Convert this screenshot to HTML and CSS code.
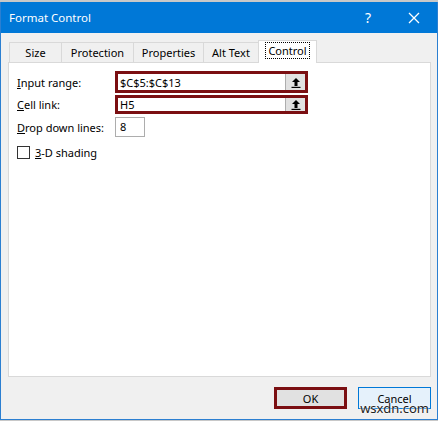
FILE: index.html
```html
<!DOCTYPE html>
<html lang="en">
<head>
    <meta charset="UTF-8">
    <meta name="viewport" content="width=device-width, initial-scale=1.0">
    <title>Format Control</title>
    <link rel="stylesheet" href="styles.css">
</head>
<body>
    <div class="dialog">
        <div class="titlebar">
            <span class="title">Format Control</span>
            <span class="help">?</span>
            <span class="close">
                <svg width="12" height="12" viewBox="0 0 12 12"><path d="M1 1 L11 11 M11 1 L1 11" stroke="#fff" stroke-width="1.3"/></svg>
            </span>
        </div>

        <div class="body">
            <div class="tabs">
                <div class="tab">Size</div>
                <div class="tab">Protection</div>
                <div class="tab">Properties</div>
                <div class="tab">Alt Text</div>
                <div class="tab active"><span class="focus">Control</span></div>
            </div>

            <div class="panel">
                <div class="row">
                    <label class="lbl"><u>I</u>nput range:</label>
                    <div class="ref marked">
                        <span class="val">$C$5:$C$13</span>
                        <span class="pick"><svg width="10" height="11" viewBox="0 0 10 11"><path d="M5 1 L9 5 H6.5 V9 H3.5 V5 H1 Z" fill="#000"/><rect x="0.5" y="9.8" width="9" height="1.2" fill="#000"/></svg></span>
                    </div>
                </div>
                <div class="row">
                    <label class="lbl"><u>C</u>ell link:</label>
                    <div class="ref marked">
                        <span class="val">H5</span>
                        <span class="pick"><svg width="10" height="11" viewBox="0 0 10 11"><path d="M5 1 L9 5 H6.5 V9 H3.5 V5 H1 Z" fill="#000"/><rect x="0.5" y="9.8" width="9" height="1.2" fill="#000"/></svg></span>
                    </div>
                </div>
                <div class="row">
                    <label class="lbl"><u>D</u>rop down lines:</label>
                    <div class="num">8</div>
                </div>
                <div class="check-row">
                    <span class="box"></span>
                    <span><u>3</u>-D shading</span>
                </div>
            </div>

            <div class="buttons">
                <button class="btn ok">OK</button>
                <button class="btn cancel">Cancel</button>
            </div>
            <div class="mark">wsxdn.com</div>
        </div>
    </div>
</body>
</html>
```

FILE: styles.css
```css
html, body {
    margin: 0;
    padding: 0;
    background: #c8c8c8;
}

body {
    font-family: "Noto Sans", "Open Sans", sans-serif;
    font-size: 11px;
    color: #000;
    padding-top: 2px;
}

.dialog {
    width: 436px;
    height: 417px;
    border: 1px solid #2b7fd1;
    border-top: none;
    background: #f0f0f0;
    display: flex;
    flex-direction: column;
}

.titlebar {
    height: 31px;
    background: #0078d7;
    color: #fff;
    display: flex;
    align-items: center;
    padding-left: 8px;
    font-size: 11.5px;
}

.title {
    flex: 1;
}

.help {
    width: 46px;
    text-align: center;
    font-size: 14px;
}

.close {
    width: 46px;
    display: flex;
    justify-content: center;
}

.body {
    flex: 1;
    padding: 7px 6px 0 7px;
    position: relative;
}

/* tab strip */
.tabs {
    display: flex;
    align-items: flex-end;
    height: 22px;
    padding-left: 1px;
}

.tab {
    height: 20px;
    line-height: 20px;
    border: 1px solid #d9d9d9;
    border-bottom: none;
    border-right: none;
    background: #f0f0f0;
    text-align: center;
    box-sizing: border-box;
}

.tab:nth-child(1) { width: 52px; }
.tab:nth-child(2) { width: 72px; }
.tab:nth-child(3) { width: 70px; }
.tab:nth-child(4) { width: 55px; }

.tab.active {
    width: 59px;
    height: 23px;
    background: #fff;
    border-right: 1px solid #d9d9d9;
    margin-bottom: -1px;
    position: relative;
    z-index: 1;
    line-height: 19px;
}

.focus {
    border: 1px dotted #000;
    padding: 0 2px;
}

.panel {
    height: 315px;
    border: 1px solid #d9d9d9;
    background: #fff;
    padding: 7px 8px;
    box-sizing: border-box;
}

.row {
    display: flex;
    align-items: center;
    height: 24px;
    margin-bottom: 1px;
}

.row:nth-child(2) {
    height: 19px;
    margin-bottom: 3px;
}

.row:nth-child(3) {
    height: 20px;
}

.lbl {
    width: 98px;
}

.ref {
    width: 193px;
    height: 18px;
    display: flex;
    align-items: center;
    box-sizing: border-box;
    border: 1px solid #7a7a7a;
}

.ref.marked {
    border: 3px solid #7b0f12;
    height: 22px;
}

.row:nth-child(2) .ref.marked {
    height: 19px;
}

.val {
    flex: 1;
    padding-left: 2px;
}

.pick {
    width: 19px;
    height: 100%;
    background: #e1e1e1;
    border-left: 1px solid #adadad;
    display: flex;
    align-items: center;
    justify-content: center;
}

.num {
    width: 30px;
    height: 20px;
    border: 1px solid #adadad;
    box-sizing: border-box;
    padding-left: 4px;
    line-height: 18px;
}

.check-row {
    display: flex;
    align-items: center;
    gap: 5px;
    margin-top: 8px;
}

.box {
    width: 13px;
    height: 13px;
    border: 1px solid #333;
    box-sizing: border-box;
    background: #fff;
}

.buttons {
    display: flex;
    justify-content: flex-end;
    gap: 11px;
    padding-top: 10px;
}

.btn {
    width: 73px;
    height: 22px;
    font-family: inherit;
    font-size: 11px;
    box-sizing: border-box;
    padding: 0;
}

.ok {
    background: #e1e1e1;
    border: 3px solid #7b0f12;
}

.cancel {
    background: #e5f1fb;
    border: 1px solid #0078d7;
}

.mark {
    position: absolute;
    right: 8px;
    bottom: 2px;
    font-size: 13px;
    color: #222;
    text-shadow: 0 0 2px #fff, 0 0 2px #fff;
}
```
